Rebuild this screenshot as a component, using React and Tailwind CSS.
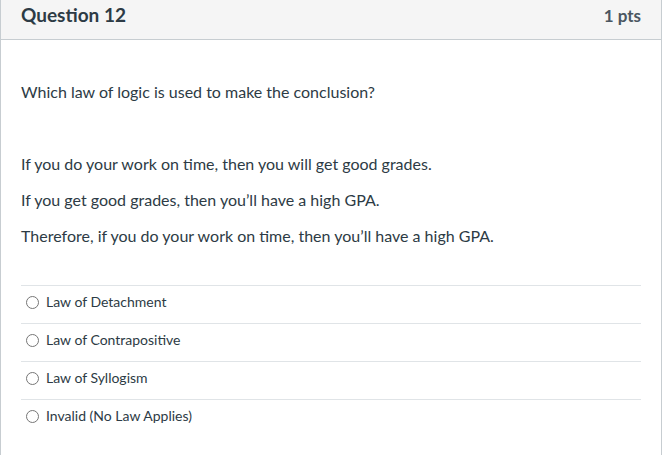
const answers = [
  'Law of Detachment',
  'Law of Contrapositive',
  'Law of Syllogism',
  'Invalid (No Law Applies)',
];

export default function App() {
  return (
    <div className="w-[667px] h-[455px] bg-white font-['Lato','Liberation_Sans',sans-serif] text-[#2d3b45]">
      <div className="w-[662px] h-[455px] border-x border-[#c7cdd1]">
        <div className="h-[40px] bg-[#f5f5f5] border-b border-[#c7cdd1] flex items-center justify-between px-5">
          <h2 className="text-[19px] font-bold leading-none -mt-[11px]">Question 12</h2>
          <span className="text-[17px] font-bold leading-none text-[#4a5661] -mt-[9px]">1 pts</span>
        </div>
        <div className="px-5 pt-[40px]">
          <p className="text-[16px] leading-[24px]">Which law of logic is used to make the conclusion?</p>
          <div className="mt-[48px] flex flex-col gap-[12px] text-[16px] leading-[24px]">
            <p>If you do your work on time, then you will get good grades.</p>
            <p>If you get good grades, then you’ll have a high GPA.</p>
            <p>Therefore, if you do your work on time, then you’ll have a high GPA.</p>
          </div>
          <div className="mt-[37px]">
            {answers.map((a) => (
              <label key={a} className="h-[38px] border-t border-[#e0e4e7] flex items-center gap-[7px] pl-[5px] pb-[6px] text-[14px]">
                <span className="w-[13px] h-[13px] rounded-full border border-[#767676] bg-white shrink-0 mt-[2px]" />
                <span>{a}</span>
              </label>
            ))}
          </div>
        </div>
      </div>
    </div>
  );
}
